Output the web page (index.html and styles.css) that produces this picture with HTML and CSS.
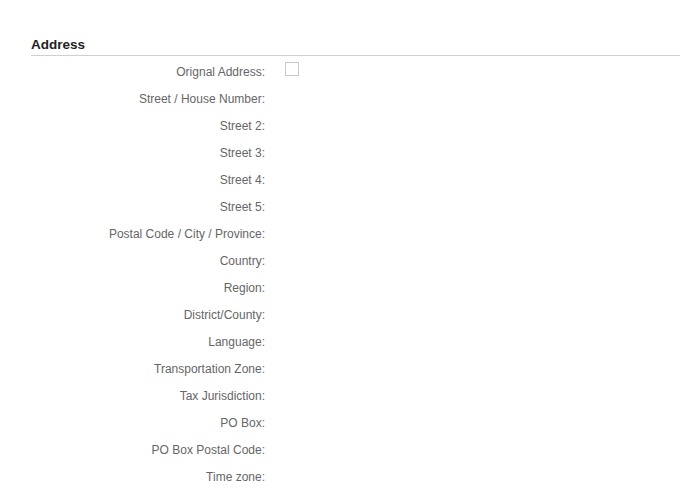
FILE: index.html
```html
<!DOCTYPE html>
<html>
<head>
<meta charset="utf-8">
<link rel="stylesheet" href="styles.css">
</head>
<body>
<section class="section">
  <h2 class="section-title">Address</h2>
  <div class="form">
    <div class="row"><span class="label">Orignal Address:</span><span class="value"><span class="checkbox"></span></span></div>
    <div class="row"><span class="label">Street / House Number:</span><span class="value"></span></div>
    <div class="row"><span class="label">Street 2:</span><span class="value"></span></div>
    <div class="row"><span class="label">Street 3:</span><span class="value"></span></div>
    <div class="row"><span class="label">Street 4:</span><span class="value"></span></div>
    <div class="row"><span class="label">Street 5:</span><span class="value"></span></div>
    <div class="row"><span class="label">Postal Code / City / Province:</span><span class="value"></span></div>
    <div class="row"><span class="label">Country:</span><span class="value"></span></div>
    <div class="row"><span class="label">Region:</span><span class="value"></span></div>
    <div class="row"><span class="label">District/County:</span><span class="value"></span></div>
    <div class="row"><span class="label">Language:</span><span class="value"></span></div>
    <div class="row"><span class="label">Transportation Zone:</span><span class="value"></span></div>
    <div class="row"><span class="label">Tax Jurisdiction:</span><span class="value"></span></div>
    <div class="row"><span class="label">PO Box:</span><span class="value"></span></div>
    <div class="row"><span class="label">PO Box Postal Code:</span><span class="value"></span></div>
    <div class="row"><span class="label">Time zone:</span><span class="value"></span></div>
  </div>
</section>
</body>
</html>
```
FILE: styles.css
```css
html, body {
  margin: 0;
  padding: 0;
  background: #fff;
}
body {
  font-family: "Liberation Sans", Arial, sans-serif;
}
.section {
  padding: 37px 0 0 31px;
}
.section-title {
  margin: 0;
  font-size: 13.5px;
  height: 16px;
  line-height: 16px;
  font-weight: bold;
  color: #222;
  padding-bottom: 2px;
  border-bottom: 1px solid #cfcfcf;
}
.form {
  padding-top: 2px;
}
.row {
  display: grid;
  grid-template-columns: 234px 1fr;
  column-gap: 20px;
  height: 27px;
  align-items: center;
}
.label {
  text-align: right;
  font-size: 12px;
  color: #666;
  line-height: 14px;
}
.value {
  display: flex;
  align-items: center;
}
.checkbox {
  display: block;
  width: 12px;
  height: 12px;
  border: 1px solid #c8c8c8;
  background: #fff;
  margin-top: -6px;
}
```
